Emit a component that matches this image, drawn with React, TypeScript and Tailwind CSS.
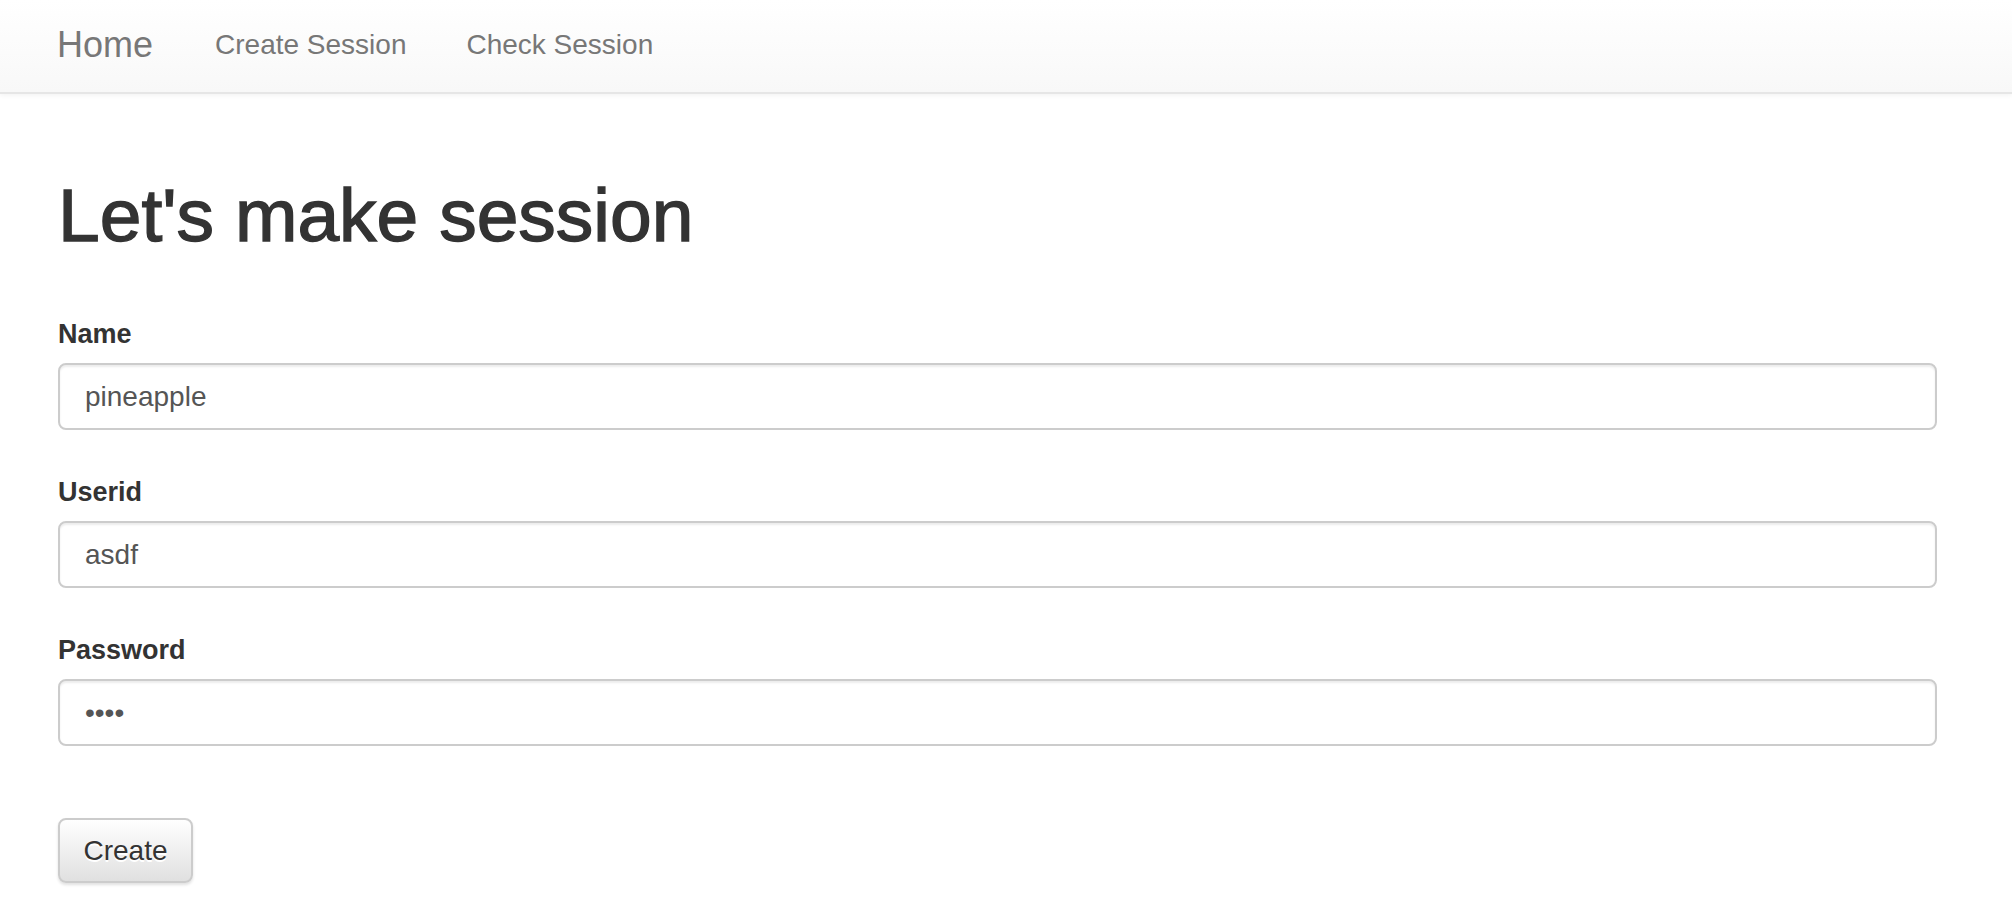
import React from "react";

function Field({ label, value, type = "text", className = "" }: { label: string; value: string; type?: string; className?: string }) {
  return (
    <div className={className}>
      <label className="block text-[27px] leading-[38px] font-bold text-[#333]">{label}</label>
      <input
        type={type}
        value={value}
        readOnly
        className="mt-[10px] block w-full h-[67px] border-2 border-[#cccccc] rounded-[8px] bg-white px-[25px] text-[28px] text-[#555] shadow-[inset_0_2px_2px_rgba(0,0,0,0.075)] outline-none font-['Liberation_Sans',Arial,sans-serif]"
      />
    </div>
  );
}

export default function App() {
  return (
    <div className="min-h-[920px] bg-white font-['Liberation_Sans',Arial,sans-serif]">
      <header className="h-[94px] flex items-center pb-[2px] pl-[57px] border-b-2 border-[#e6e6e6] bg-linear-to-b from-white to-[#f8f8f8] shadow-[0_1px_5px_rgba(0,0,0,0.06)]">
        <a className="text-[36px] text-[#777] pr-[32px] cursor-pointer">Home</a>
        <a className="text-[28px] text-[#777] px-[30px] cursor-pointer">Create Session</a>
        <a className="text-[28px] text-[#777] px-[30px] cursor-pointer">Check Session</a>
      </header>
      <main className="pl-[58px] pr-[75px] pt-[80px]">
        <h1 className="text-[75px] leading-[82px] font-medium text-[#333] [-webkit-text-stroke:1.4px_#333]">Let's make session</h1>
        <Field className="mt-[59px]" label="Name" value="pineapple" />
        <Field className="mt-[43px]" label="Userid" value="asdf" />
        <Field className="mt-[43px]" label="Password" value="asdf" type="password" />
        <button className="mt-[72px] block w-[135px] h-[65px] border-2 border-[#cccccc] rounded-[8px] bg-linear-to-b from-white to-[#e0e0e0] text-[28px] text-[#333] shadow-[0_2px_3px_rgba(0,0,0,0.12)] [text-shadow:0_2px_0_#fff]">
          Create
        </button>
      </main>
    </div>
  );
}
